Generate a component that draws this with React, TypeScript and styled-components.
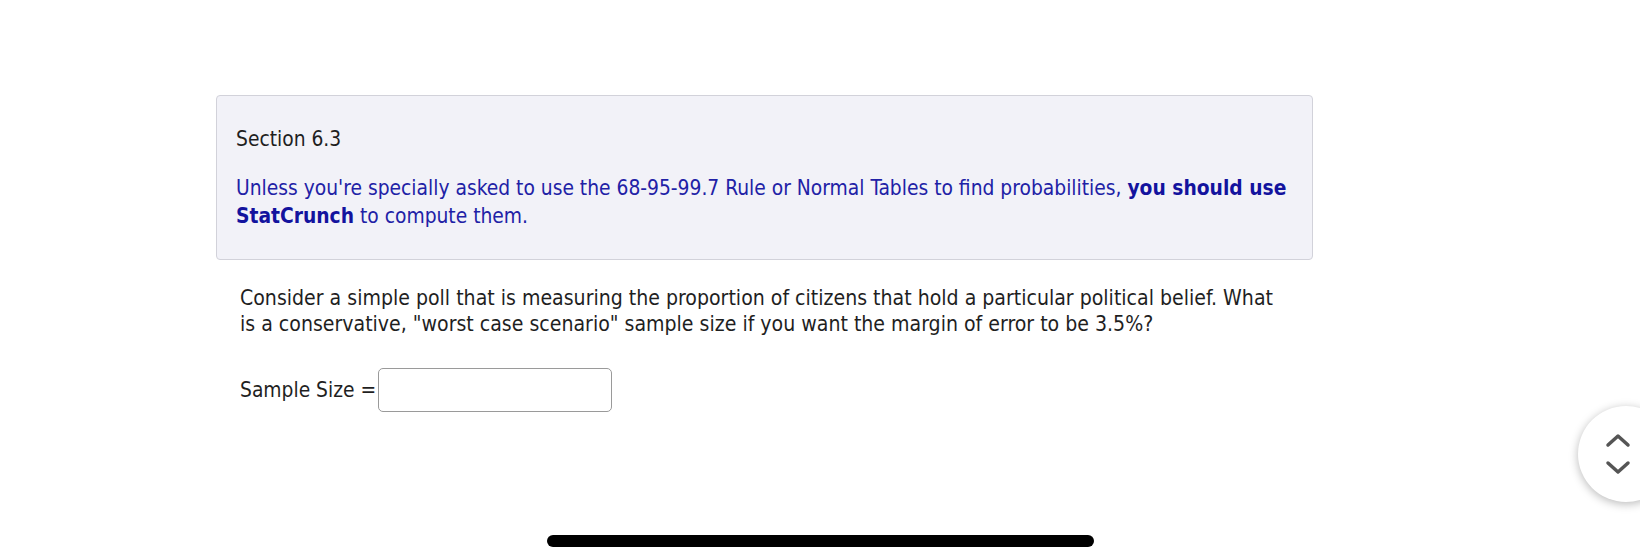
import styled, { createGlobalStyle } from "styled-components";

const GlobalStyle = createGlobalStyle`
  html, body {
    margin: 0;
    padding: 0;
    background: #ffffff;
  }
  body {
    font-family: "DejaVu Sans Condensed", "DejaVu Sans", sans-serif;
    font-stretch: condensed;
    color: #1f1f1f;
  }
`;

const Screen = styled.div`
  position: relative;
  width: 1640px;
  height: 560px;
  overflow: hidden;
  background: #ffffff;
`;

const Content = styled.main`
  width: 1097px;
  padding: 95px 0 0 216px;
  display: flex;
  flex-direction: column;
`;

const InfoBox = styled.section`
  box-sizing: border-box;
  height: 165px;
  background: #f2f2f8;
  border: 1px solid #d2d2da;
  border-radius: 4px;
  padding: 29px 19px 0 19px;
  font-size: 20.8px;
  line-height: 28px;
`;

const SectionTitle = styled.p`
  margin: 0 0 21px;
  color: #1f1f1f;
`;

const Note = styled.p`
  margin: 0;
  color: #2121a6;
`;

const Strong = styled.strong`
  font-weight: 700;
  color: #13139e;
`;

const Question = styled.div`
  padding: 25px 0 0 24px;
  font-size: 21.1px;
  line-height: 26px;
`;

const Prompt = styled.p`
  margin: 0;
  max-width: 1050px;
`;

const AnswerRow = styled.label`
  display: flex;
  align-items: center;
  gap: 2px;
  margin-top: 31px;
  font-size: 20.8px;
`;

const AnswerInput = styled.input`
  box-sizing: border-box;
  width: 234px;
  height: 44px;
  border: 1px solid #9a9a9a;
  border-radius: 5px;
  background: #ffffff;
  font: inherit;
  padding: 0 10px;
  outline: none;
`;

const ScrollButton = styled.div`
  position: absolute;
  left: 1578px;
  top: 406px;
  width: 96px;
  height: 96px;
  border-radius: 50%;
  background: #ffffff;
  box-shadow: 0 2px 10px rgba(0, 0, 0, 0.28);
  display: flex;
  flex-direction: column;
  align-items: flex-start;
  justify-content: center;
  gap: 12px;
  padding-left: 27px;
  box-sizing: border-box;
`;

const Chevron = styled.svg`
  display: block;
  width: 26px;
  height: 16px;
`;

const HomeIndicator = styled.div`
  position: absolute;
  left: 547px;
  top: 535px;
  width: 547px;
  height: 12px;
  border-radius: 6px;
  background: #000000;
`;

export default function App() {
  return (
    <Screen>
      <GlobalStyle />
      <Content>
        <InfoBox>
          <SectionTitle>Section 6.3</SectionTitle>
          <Note>
            Unless you're specially asked to use the 68-95-99.7 Rule or Normal
            Tables to find probabilities, <Strong>you should use</Strong>{" "}
            <Strong>StatCrunch</Strong> to compute them.
          </Note>
        </InfoBox>
        <Question>
          <Prompt>
            Consider a simple poll that is measuring the proportion of citizens
            that hold a particular political belief. What is a conservative,
            "worst case scenario" sample size if you want the margin of error to
            be 3.5%?
          </Prompt>
          <AnswerRow>
            Sample Size =
            <AnswerInput type="text" />
          </AnswerRow>
        </Question>
      </Content>
      <ScrollButton>
        <Chevron viewBox="0 0 26 16">
          <path d="M3 13 L13 4 L23 13" fill="none" stroke="#555" strokeWidth="3.5" strokeLinecap="round" strokeLinejoin="round" />
        </Chevron>
        <Chevron viewBox="0 0 26 16">
          <path d="M3 3 L13 12 L23 3" fill="none" stroke="#555" strokeWidth="3.5" strokeLinecap="round" strokeLinejoin="round" />
        </Chevron>
      </ScrollButton>
      <HomeIndicator />
    </Screen>
  );
}
